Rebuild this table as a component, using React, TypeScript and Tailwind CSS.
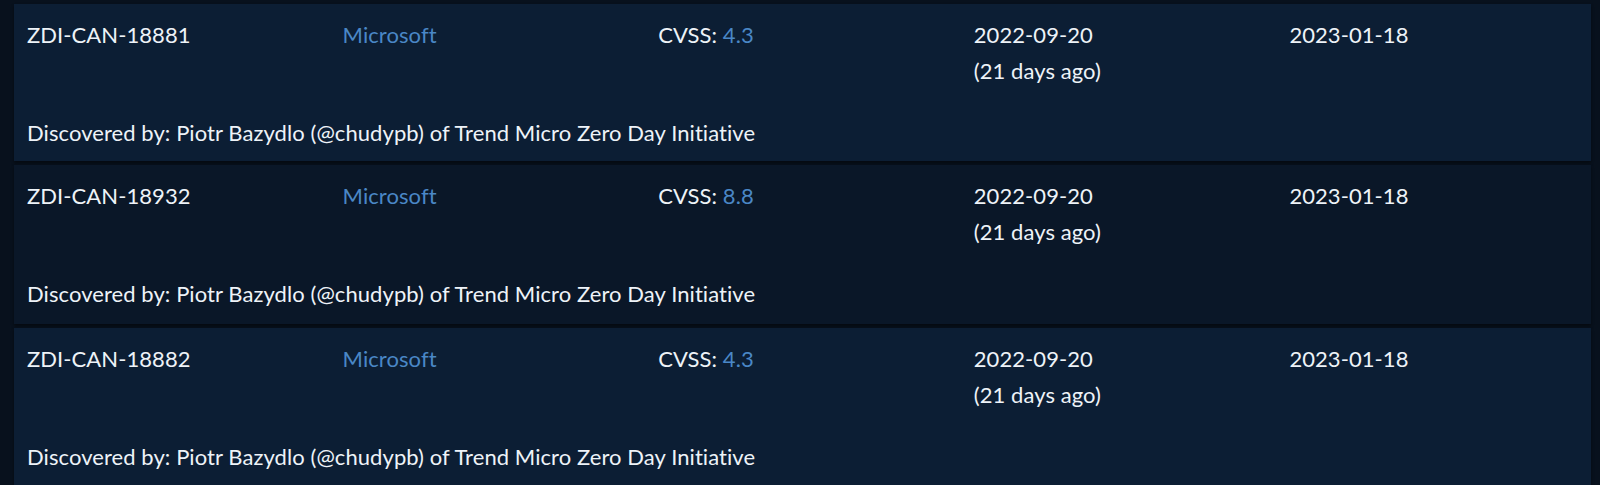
// Lista de CVEs próximos a serem publicados
interface Advisory {
  id: string;
  vendor: string;
  cvss: string;
  reported: string;
  ago: string;
  deadline: string;
  discoverer: string;
}

const advisories: Advisory[] = [
  {
    id: 'ZDI-CAN-18881',
    vendor: 'Microsoft',
    cvss: '4.3',
    reported: '2022-09-20',
    ago: '(21 days ago)',
    deadline: '2023-01-18',
    discoverer: 'Discovered by: Piotr Bazydlo (@chudypb) of Trend Micro Zero Day Initiative',
  },
  {
    id: 'ZDI-CAN-18932',
    vendor: 'Microsoft',
    cvss: '8.8',
    reported: '2022-09-20',
    ago: '(21 days ago)',
    deadline: '2023-01-18',
    discoverer: 'Discovered by: Piotr Bazydlo (@chudypb) of Trend Micro Zero Day Initiative',
  },
  {
    id: 'ZDI-CAN-18882',
    vendor: 'Microsoft',
    cvss: '4.3',
    reported: '2022-09-20',
    ago: '(21 days ago)',
    deadline: '2023-01-18',
    discoverer: 'Discovered by: Piotr Bazydlo (@chudypb) of Trend Micro Zero Day Initiative',
  },
];

function AdvisoryRow({ item, even }: { item: Advisory; even: boolean }) {
  return (
    <div
      className={`shrink-0 pl-[13px] pt-[13px] shadow-[0_2px_3px_rgba(0,0,0,0.45)] ${
        even ? 'h-[159px] bg-[#0a1728]' : 'h-[157px] bg-[#0c1e34]'
      }`}
    >
      <div className="grid grid-cols-[repeat(5,315.6px)] leading-[36px]">
        <div>{item.id}</div>
        <div>
          <a href="#" className="text-[#4a87c6]">{item.vendor}</a>
        </div>
        <div>
          CVSS: <span className="text-[#4a87c6]">{item.cvss}</span>
        </div>
        <div>
          <div>{item.reported}</div>
          <div>{item.ago}</div>
        </div>
        <div>{item.deadline}</div>
      </div>
      <p className="mt-[26px] leading-[36px]">{item.discoverer}</p>
    </div>
  );
}

export default function App() {
  return (
    <div className="h-screen overflow-hidden bg-[#08111d] pt-[4px] pl-[14px] pr-[9px] font-['Lato',sans-serif] text-[22px] tracking-[0.07px] text-[#eef3f8]">
      <div className="flex flex-col gap-[4px]">
        {advisories.map((a, i) => (
          <AdvisoryRow key={a.id} item={a} even={i % 2 === 1} />
        ))}
      </div>
    </div>
  );
}
